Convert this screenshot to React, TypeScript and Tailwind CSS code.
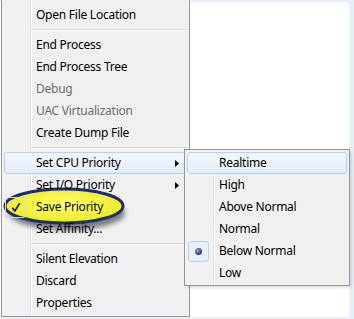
import React from 'react';

type Item =
  | { kind: 'sep' }
  | {
      kind: 'item';
      label: string;
      disabled?: boolean;
      sub?: boolean;
      hot?: boolean;
      mark?: 'check' | 'dot';
      circled?: boolean;
    };

const mainItems: Item[] = [
  { kind: 'item', label: 'Open File Location' },
  { kind: 'sep' },
  { kind: 'item', label: 'End Process' },
  { kind: 'item', label: 'End Process Tree' },
  { kind: 'item', label: 'Debug', disabled: true },
  { kind: 'item', label: 'UAC Virtualization', disabled: true },
  { kind: 'item', label: 'Create Dump File' },
  { kind: 'sep' },
  { kind: 'item', label: 'Set CPU Priority', sub: true, hot: true },
  { kind: 'item', label: 'Set I/O Priority', sub: true },
  { kind: 'item', label: 'Save Priority', mark: 'check', circled: true },
  { kind: 'item', label: 'Set Affinity...' },
  { kind: 'sep' },
  { kind: 'item', label: 'Silent Elevation' },
  { kind: 'item', label: 'Discard' },
  { kind: 'item', label: 'Properties' },
];

const priorityItems: Item[] = [
  { kind: 'item', label: 'Realtime', hot: true },
  { kind: 'item', label: 'High' },
  { kind: 'item', label: 'Above Normal' },
  { kind: 'item', label: 'Normal' },
  { kind: 'item', label: 'Below Normal', mark: 'dot' },
  { kind: 'item', label: 'Low' },
];

const menuBg =
  'bg-[linear-gradient(to_right,#f1f1f1_28px,#e2e3e3_28px,#e2e3e3_29px,#ffffff_29px,#ffffff_30px,#f0f0f0_30px)]';

function Highlight() {
  // yellow callout ellipse drawn round "Save Priority"
  return (
    <svg
      width="134"
      height="54"
      viewBox="0 0 134 54"
      className="absolute left-[-3px] top-[-11px] z-0 pointer-events-none"
    >
      <defs>
        <radialGradient id="yel" cx="50%" cy="45%" r="60%">
          <stop offset="0%" stopColor="#ffff70" />
          <stop offset="100%" stopColor="#eaea1a" />
        </radialGradient>
        <filter id="blur" x="-20%" y="-40%" width="140%" height="180%">
          <feGaussianBlur stdDeviation="2.8" />
        </filter>
      </defs>
      <ellipse cx="65" cy="27" rx="58" ry="17" fill="#4a4a4a" opacity="0.7" filter="url(#blur)" />
      <ellipse cx="62" cy="20" rx="59" ry="17" fill="url(#yel)" stroke="#1b2f70" strokeWidth="3" />
    </svg>
  );
}

function Row({ item }: { item: Extract<Item, { kind: 'item' }> }) {
  return (
    <div
      className={`relative flex h-[22px] mx-[2px] items-center rounded-[3px] border ${
        item.hot
          ? 'border-[#b4d2f4] bg-[linear-gradient(to_bottom,#f4f8fd,#e4ecf7)]'
          : 'border-transparent'
      }`}
    >
      {item.circled && <Highlight />}
      <div className="relative z-10 flex h-[21px] w-[21px] items-center justify-center">
        {item.mark === 'check' && (
          <div className="flex h-[21px] w-[21px] items-center justify-center rounded-[3px] border border-[#c9d9ee]">
            <svg width="10" height="11" viewBox="0 0 10 11">
              <path d="M1.3 5.8 L3.9 9 L8.8 1.2" fill="none" stroke="#000" strokeWidth="1.5" />
            </svg>
          </div>
        )}
        {item.mark === 'dot' && (
          <div className="flex h-[21px] w-[21px] items-center justify-center rounded-[3px] border border-[#b4d2f4] bg-[#e8eff9]">
            <div className="h-[7px] w-[7px] rounded-full bg-[radial-gradient(circle_at_35%_35%,#9a9ee0,#2e3390_70%)]" />
          </div>
        )}
      </div>
      <span
        className={`relative z-10 ml-[10px] text-[12px] leading-none tracking-[-0.25px] whitespace-nowrap ${
          item.disabled ? 'text-[#6d6d6d]' : 'text-black'
        }`}
      >
        {item.label}
      </span>
      {item.sub && (
        <svg width="4" height="7" viewBox="0 0 4 7" className="ml-auto mr-[7px]">
          <path d="M0 0 L4 3.5 L0 7 Z" fill="#000" />
        </svg>
      )}
    </div>
  );
}

function Separator() {
  return (
    <div className="flex h-[8px] flex-col justify-center pl-[29px] pr-[2px]">
      <div className="h-px bg-[#d7d7d7]" />
      <div className="h-px bg-white" />
    </div>
  );
}

export default function App() {
  return (
    <div
      className="relative h-[319px] w-[354px] overflow-hidden bg-[#e9eff8]"
      style={{ fontFamily: '"Noto Sans", "Open Sans", sans-serif' }}
    >
      <div className="mt-[2px] mr-[5px] h-[315px] bg-white" />

      {/* ===== MAIN CONTEXT MENU ===== */}
      <div
        className={`absolute left-[1px] top-0 flex h-[317px] w-[189px] flex-col border-x border-b border-[#979797] pt-[4px] ${menuBg}`}
      >
        {mainItems.map((it, i) =>
          it.kind === 'sep' ? <Separator key={i} /> : <Row key={i} item={it} />
        )}
      </div>

      {/* ===== CPU PRIORITY SUBMENU ===== */}
      <div
        className={`absolute left-[184px] top-[149px] flex h-[137px] w-[166px] flex-col border border-[#979797] pt-[2px] shadow-[2px_2px_3px_rgba(0,0,0,0.12)] ${menuBg}`}
      >
        {priorityItems.map((it, i) =>
          it.kind === 'sep' ? <Separator key={i} /> : <Row key={i} item={it} />
        )}
      </div>
    </div>
  );
}
